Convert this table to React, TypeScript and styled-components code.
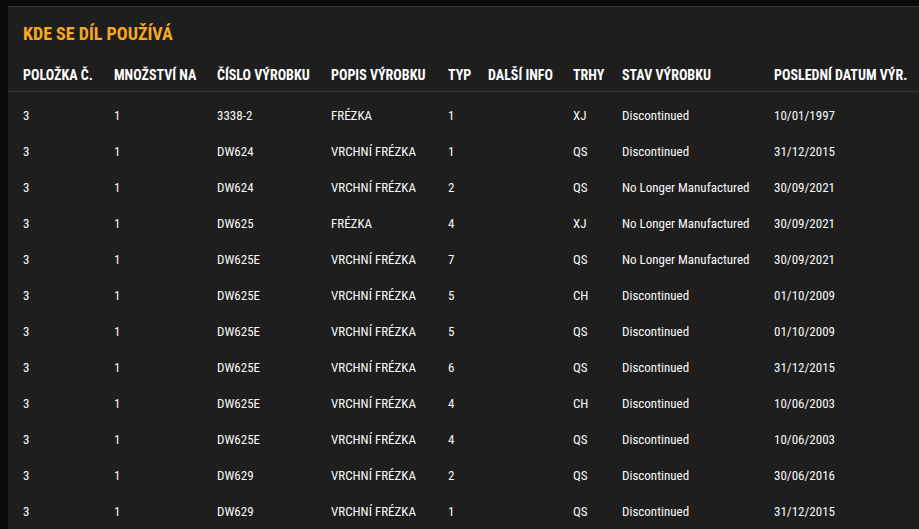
import React from "react";
import styled, { createGlobalStyle } from "styled-components";

const Global = createGlobalStyle`
  html, body {
    margin: 0;
    padding: 0;
    background: #0a0a0a;
    overflow: hidden;
  }
  body {
    font-family: "Roboto Condensed", "Open Sans Condensed", "Roboto", sans-serif;
    color: #f2f2f2;
  }
`;

const Page = styled.div`
  padding: 6px 0 0 8px;
  height: 529px;
  box-sizing: border-box;
  overflow: hidden;
`;

const Panel = styled.section`
  background: #1e1e1e;
  border-top: 1px solid #3a3a3a;
  min-height: 540px;
  padding-top: 18px;
`;

const Title = styled.h2`
  margin: 0 0 16px 15px;
  font-size: 18px;
  line-height: 18px;
  font-weight: 700;
  color: #f7a823;
  text-transform: uppercase;
`;

const COLS = "106px 103px 114px 117px 40px 85px 49px 152px 1fr";

const HeadRow = styled.div`
  display: grid;
  grid-template-columns: ${COLS};
  height: 32px;
  align-items: center;
  border-bottom: 1px solid #3a3a3a;
  margin-bottom: 5px;
`;

const Row = styled.div`
  display: grid;
  grid-template-columns: ${COLS};
  height: 36px;
  align-items: center;
`;

const HeadCell = styled.div`
  font-size: 14px;
  font-weight: 700;
  text-transform: uppercase;
  white-space: nowrap;
  color: #ffffff;
  &:first-child {
    padding-left: 15px;
  }
`;

const Cell = styled.div`
  font-size: 13px;
  font-weight: 400;
  white-space: nowrap;
  color: #f8f8f8;
  &:first-child {
    padding-left: 15px;
  }
`;

const headers = [
  "Položka č.",
  "Množství na",
  "Číslo výrobku",
  "Popis výrobku",
  "Typ",
  "Další info",
  "Trhy",
  "Stav výrobku",
  "Poslední datum výr.",
];

type R = [string, string, string, string, string, string, string, string, string];

const rows: R[] = [
  ["3", "1", "3338-2", "FRÉZKA", "1", "", "XJ", "Discontinued", "10/01/1997"],
  ["3", "1", "DW624", "VRCHNÍ FRÉZKA", "1", "", "QS", "Discontinued", "31/12/2015"],
  ["3", "1", "DW624", "VRCHNÍ FRÉZKA", "2", "", "QS", "No Longer Manufactured", "30/09/2021"],
  ["3", "1", "DW625", "FRÉZKA", "4", "", "XJ", "No Longer Manufactured", "30/09/2021"],
  ["3", "1", "DW625E", "VRCHNÍ FRÉZKA", "7", "", "QS", "No Longer Manufactured", "30/09/2021"],
  ["3", "1", "DW625E", "VRCHNÍ FRÉZKA", "5", "", "CH", "Discontinued", "01/10/2009"],
  ["3", "1", "DW625E", "VRCHNÍ FRÉZKA", "5", "", "QS", "Discontinued", "01/10/2009"],
  ["3", "1", "DW625E", "VRCHNÍ FRÉZKA", "6", "", "QS", "Discontinued", "31/12/2015"],
  ["3", "1", "DW625E", "VRCHNÍ FRÉZKA", "4", "", "CH", "Discontinued", "10/06/2003"],
  ["3", "1", "DW625E", "VRCHNÍ FRÉZKA", "4", "", "QS", "Discontinued", "10/06/2003"],
  ["3", "1", "DW629", "VRCHNÍ FRÉZKA", "2", "", "QS", "Discontinued", "30/06/2016"],
  ["3", "1", "DW629", "VRCHNÍ FRÉZKA", "1", "", "QS", "Discontinued", "31/12/2015"],
];

export default function App() {
  return (
    <>
      <Global />
      <Page>
        <Panel>
          <Title>Kde se díl používá</Title>
          <HeadRow>
            {headers.map((h) => (
              <HeadCell key={h}>{h}</HeadCell>
            ))}
          </HeadRow>
          {rows.map((r, i) => (
            <Row key={i}>
              {r.map((c, j) => (
                <Cell key={j}>{c}</Cell>
              ))}
            </Row>
          ))}
        </Panel>
      </Page>
    </>
  );
}
